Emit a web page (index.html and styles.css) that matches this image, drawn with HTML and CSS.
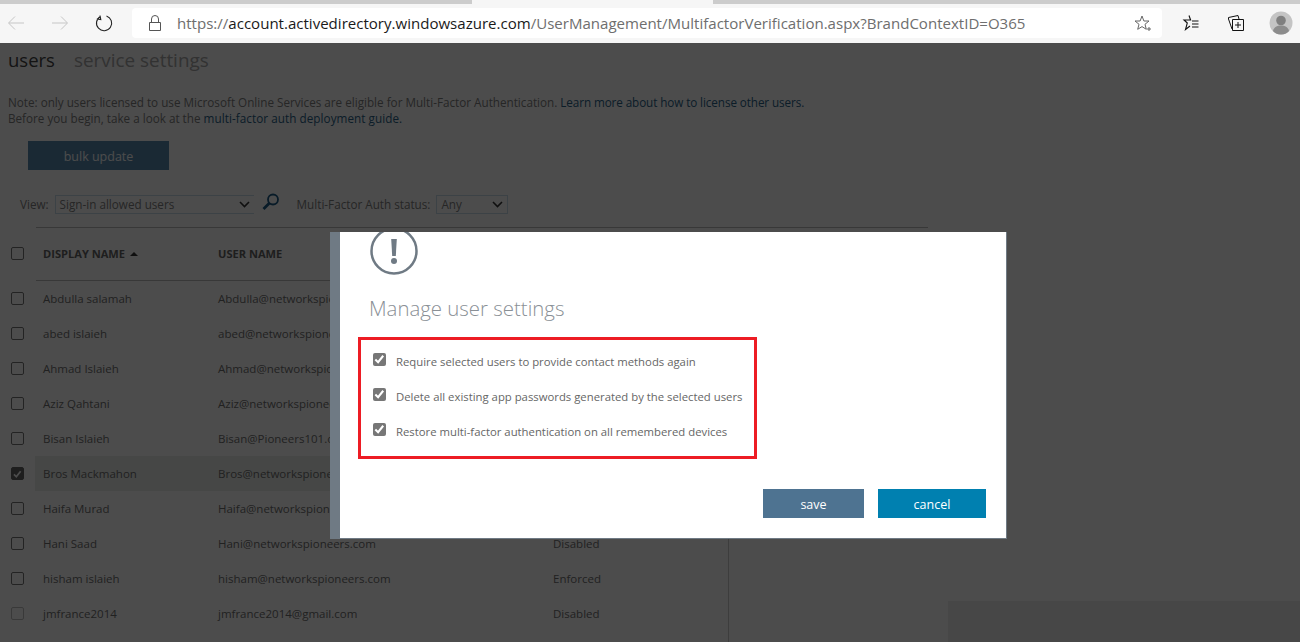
FILE: index.html
```html
<!DOCTYPE html>
<html lang="en">
<head>
<meta charset="utf-8">
<title>Multi-factor verification</title>
<link rel="stylesheet" href="styles.css">
</head>
<body>
<div class="tabstrip"><div class="active-tab"></div></div>
<header class="toolbar">
  <svg class="nav-icon" width="20" height="20" viewBox="0 0 20 20"><path d="M18 10H3M9 3.500 2.500 10 9 16.500" fill="none" stroke="#c6c6c6" stroke-width="1"/></svg>
  <svg class="nav-icon" width="20" height="20" viewBox="0 0 20 20"><path d="M2 10h15M11 3.500 17.500 10 11 16.500" fill="none" stroke="#c6c6c6" stroke-width="1"/></svg>
  <svg class="nav-icon" width="20" height="20" viewBox="0 0 20 20"><path d="M6.500 3.400A7.600 7.600 0 1 0 12.500 2.900M6 2.500 6.800 6.500 2.800 6" fill="none" stroke="#222" stroke-width="1.100"/></svg>
  <div class="address">
    <svg class="lock" width="14" height="18" viewBox="0 0 14 18"><path d="M3.500 8V5a3.500 3.500 0 0 1 7 0v3M1.500 8.500h11v8h-11z" fill="none" stroke="#555" stroke-width="1"/></svg>
    <span class="url"><span class="scheme">https://</span><span class="host">account.activedirectory.windowsazure.com</span><span class="scheme">/UserManagement/MultifactorVerification.aspx?BrandContextID=O365</span></span>
    <svg class="fav" width="18" height="18" viewBox="0 0 18 18"><path d="M8 2l1.900 5H15l-4 3.300 1.300 5L8 12.600 3.700 15.300 5 10.300 1 7h5.100z" fill="none" stroke="#666" stroke-width="1"/><path d="M13 15h4M15 13v4" stroke="#666" stroke-width="1"/></svg>
  </div>
  <svg class="tool favorites" width="18" height="18" viewBox="0 0 18 18"><path d="M7 1.500 8.600 6H2l3.300 3L3.500 15.500 8 12" fill="none" stroke="#111" stroke-width="1.100"/><path d="M10 7h6.500M10 10h6.500M10 13h6.500" stroke="#111" stroke-width="1.100"/></svg>
  <svg class="tool collections" width="18" height="18" viewBox="0 0 18 18"><path d="M5 15 1.500 5 1.500 3.500 11 1.500 12 5" fill="none" stroke="#111" stroke-width="1"/><path d="M5.500 5.500h11v11h-11zM11 8v6M8 11h6" fill="#f5f5f5" stroke="#111" stroke-width="1"/></svg>
  <svg class="avatar" width="24" height="24" viewBox="0 0 24 24"><circle cx="12" cy="12" r="11.500" fill="#c4c4c4"/><circle cx="12" cy="9.500" r="4.800" fill="#7f7f7f"/><path d="M4 20c1-4 4-5.500 8-5.500s7 1.500 8 5.500c-2 2.400-5 3.500-8 3.500s-6-1.100-8-3.500z" fill="#8c8c8c"/></svg>
</header>

<main class="page">
  <nav class="tabs"><span class="tab active">users</span><span class="tab">service settings</span></nav>
  <p class="note">Note: only users licensed to use Microsoft Online Services are eligible for Multi-Factor Authentication. <a class="tight" href="#">Learn more about how to license other users.</a><br>Before you begin, take a look at the <a class="loose" href="#">multi-factor auth deployment guide.</a></p>
  <button class="bulk" type="button">bulk update</button>
  <div class="filters">
    <span>View:</span>
    <span class="select wide">Sign-in allowed users<svg width="11" height="7" viewBox="0 0 11 7"><path d="M1 1l4.500 4.500L10 1" fill="none" stroke="#333" stroke-width="1.600"/></svg></span>
    <svg class="search" width="18" height="18" viewBox="0 0 18 18"><circle cx="11" cy="6.500" r="5" fill="none" stroke="#1c5a85" stroke-width="1.800"/><path d="M7.500 10 1.500 16" stroke="#1c5a85" stroke-width="2.800"/></svg>
    <span class="status-label">Multi-Factor Auth status:</span>
    <span class="select narrow">Any<svg width="11" height="7" viewBox="0 0 11 7"><path d="M1 1l4.500 4.500L10 1" fill="none" stroke="#333" stroke-width="1.600"/></svg></span>
  </div>
  <div class="table">
    <div class="row head"><span class="box"></span><span class="name">DISPLAY NAME <i class="caret"></i></span><span class="user">USER NAME</span></div>
    <div class="row"><span class="box"></span><span class="name">Abdulla salamah</span><span class="user">Abdulla@networkspioneers.com</span></div>
    <div class="row"><span class="box"></span><span class="name">abed islaieh</span><span class="user">abed@networkspioneers.com</span></div>
    <div class="row"><span class="box"></span><span class="name">Ahmad Islaieh</span><span class="user">Ahmad@networkspioneers.com</span></div>
    <div class="row"><span class="box"></span><span class="name">Aziz Qahtani</span><span class="user">Aziz@networkspioneers.com</span></div>
    <div class="row"><span class="box"></span><span class="name">Bisan Islaieh</span><span class="user">Bisan@Pioneers101.onmicrosoft.com</span></div>
    <div class="row selected"><span class="box checked"><svg width="14" height="14" viewBox="0 0 14 14"><path d="M2.500 7.500 5.500 10.500 11 3.500" fill="none" stroke="#fff" stroke-width="2.200"/></svg></span><span class="name">Bros Mackmahon</span><span class="user">Bros@networkspioneers.com</span></div>
    <div class="row"><span class="box"></span><span class="name">Haifa Murad</span><span class="user">Haifa@networkspioneers.com</span></div>
    <div class="row"><span class="box"></span><span class="name">Hani Saad</span><span class="user">Hani@networkspioneers.com</span><span class="state">Disabled</span></div>
    <div class="row"><span class="box"></span><span class="name">hisham islaieh</span><span class="user">hisham@networkspioneers.com</span><span class="state">Enforced</span></div>
    <div class="row"><span class="box faint"></span><span class="name">jmfrance2014</span><span class="user">jmfrance2014@gmail.com</span><span class="state">Disabled</span></div>
  </div>
  <div class="divider"></div>
  <div class="footer-shade"></div>
</main>

<div class="overlay"></div>

<section class="dialog">
  <svg class="warn" width="48" height="48" viewBox="0 0 48 48"><circle cx="24" cy="20" r="22.500" fill="none" stroke="#6f7a84" stroke-width="2.500"/><path d="M21.200 8h5.600l-1 17h-3.600z" fill="#6f7a84"/><circle cx="24" cy="30" r="3" fill="#6f7a84"/></svg>
  <h2>Manage user settings</h2>
  <div class="options">
    <label class="option"><span class="tick"><svg width="14" height="14" viewBox="0 0 14 14"><path d="M2.500 7.500 5.500 10.500 11 3.500" fill="none" stroke="#fff" stroke-width="2.200"/></svg></span>Require selected users to provide contact methods again</label>
    <label class="option"><span class="tick"><svg width="14" height="14" viewBox="0 0 14 14"><path d="M2.500 7.500 5.500 10.500 11 3.500" fill="none" stroke="#fff" stroke-width="2.200"/></svg></span>Delete all existing app passwords generated by the selected users</label>
    <label class="option"><span class="tick"><svg width="14" height="14" viewBox="0 0 14 14"><path d="M2.500 7.500 5.500 10.500 11 3.500" fill="none" stroke="#fff" stroke-width="2.200"/></svg></span>Restore multi-factor authentication on all remembered devices</label>
  </div>
  <div class="actions">
    <button class="save" type="button">save</button>
    <button class="cancel" type="button">cancel</button>
  </div>
</section>
</body>
</html>
```
FILE: styles.css
```css
* { box-sizing: border-box; }
html, body { margin: 0; height: 642px; overflow: hidden; }
body { font-family: "Open Sans", "Noto Sans", sans-serif; background: #fff; color: #666; }

.tabstrip { height: 4px; background: #cccccc; }
.active-tab { width: 241px; height: 4px; margin-left: 472px; background: #f6f6f6; }
.toolbar { position: relative; z-index: 3; height: 39px; background: #f6f6f6; display: flex; align-items: center; padding: 0 0 1px 6px; }
.nav-icon { flex: none; margin-right: 24px; }
.nav-icon:nth-child(3) { margin-right: 18px; }
.address { width: 1030px; height: 30px; background: #fff; border-radius: 4px; display: flex; align-items: center; padding: 0 10px 0 16px; }
.lock { flex: none; margin-right: 15px; }
.url { flex: 1; font-family: "Open Sans", sans-serif; font-size: 15.050px; white-space: nowrap; }
.scheme { color: #6e6e6e; }
.host { color: #1a1a1a; }
.fav { flex: none; }
.favorites { flex: none; margin-left: 20px; }
.collections { flex: none; margin-left: 27px; }
.avatar { flex: none; margin-left: 24px; }

.page { position: relative; height: 599px; padding: 0 8px; overflow: hidden; }
.tabs { display: flex; gap: 19px; font-size: 18.900px; line-height: 26px; padding-top: 4px; color: #a8a8a8; }
.tab.active { color: #444; font-size: 18.500px; }
.note { margin: 21px 0 0; font-size: 11.700px; line-height: 16px; color: #808080; }
.note a { color: #2a6288; text-decoration: none; }
.tight { letter-spacing: -0.090px; }
.loose { letter-spacing: 0.060px; }
.bulk { display: block; margin: 15px 0 0 20px; width: 141px; height: 29px; padding: 1px 0 0; border: 0; background: #578ab0; color: #fff; font: 12.500px "Open Sans", sans-serif; }
.filters { display: flex; align-items: center; height: 20px; margin: 24px 0 0 12px; font-size: 11.700px; color: #808080; }
.select { display: flex; align-items: center; justify-content: space-between; height: 19px; border: 1px solid #c8dcec; padding: 0 4px; background: #fff; color: #808080; }
.wide { width: 199px; margin-left: 6px; border-right: 0; }
.narrow { width: 72px; margin-left: 6px; }
.search { margin: -4px 0 0 8px; flex: none; }
.status-label { margin-left: 17px; }

.table { margin-top: 13px; width: 706px; font-size: 11.500px; color: #707070; position: relative; z-index: 0; }
.row { display: flex; align-items: center; height: 35px; position: relative; }
.head { height: 54px; margin-left: 28px; width: 892px; padding-bottom: 2px; border-top: 1px solid #bbb; border-bottom: 1px solid #bbb; font-weight: 700; font-size: 11.100px; color: #666; }
.head .box { margin-left: -25px; }
.box { flex: none; width: 13px; height: 13px; border: 1px solid #777; border-radius: 2px; margin-left: 3px; background: #fff; display: flex; align-items: center; justify-content: center; }
.box.checked { background: #666; border-color: #666; }
.box.faint { border-color: #c0c0c0; }
.name { width: 175px; margin-left: 19px; white-space: nowrap; flex: none; }
.user { width: 335px; white-space: nowrap; flex: none; }
.state { white-space: nowrap; }
.caret { display: inline-block; width: 0; height: 0; border: 4px solid transparent; border-top: 0; border-bottom: 4px solid #333; margin: 0 0 2px 2px; }
.selected::before { content: ""; position: absolute; left: 27px; top: 0; right: 0; height: 100%; background: #e9eeea; z-index: -1; }

.divider { position: absolute; left: 728px; top: 189px; bottom: 0; width: 1px; background: #ccc; }
.footer-shade { position: absolute; right: 0; bottom: 0; width: 352px; height: 41px; background: #ededed; }

.overlay { position: absolute; left: 0; top: 43px; width: 1300px; height: 599px; background: rgba(0, 0, 0, 0.7); z-index: 1; }

.dialog { position: absolute; z-index: 2; left: 330px; top: 232px; width: 677px; height: 307px; background: #fff; border-left: 10px solid #6f7a84; border-bottom: 1px solid #6f7a84; border-right: 1px solid #6f7a84; padding: 0 0 0 30px; overflow: hidden; }
.warn { display: block; margin-top: -1px; }
.dialog h2 { margin: 15px 0 0 -1px; font-weight: 300; font-size: 20.400px; line-height: 28px; color: #8a9096; font-family: "Open Sans", sans-serif; }
.options { margin: 15px 0 0 -12px; width: 399px; height: 122px; border: 3px solid #ed1c24; padding: 4px 0 0 12px; }
.option { display: flex; align-items: center; height: 35px; font-size: 11.340px; color: #666; white-space: nowrap; }
.tick { flex: none; width: 13px; height: 13px; margin: -5px 10px 0 0; background: #777; border-radius: 2px; display: flex; align-items: center; justify-content: center; }
.actions { display: flex; justify-content: flex-end; gap: 14px; margin: 30px 20px 0 0; }
.actions button { height: 29px; padding: 1px 0 0; border: 0; color: #fff; font: 12.500px "Open Sans", sans-serif; }
.save { width: 101px; background: #4e7391; }
.cancel { width: 108px; background: #0080b0; }
```
